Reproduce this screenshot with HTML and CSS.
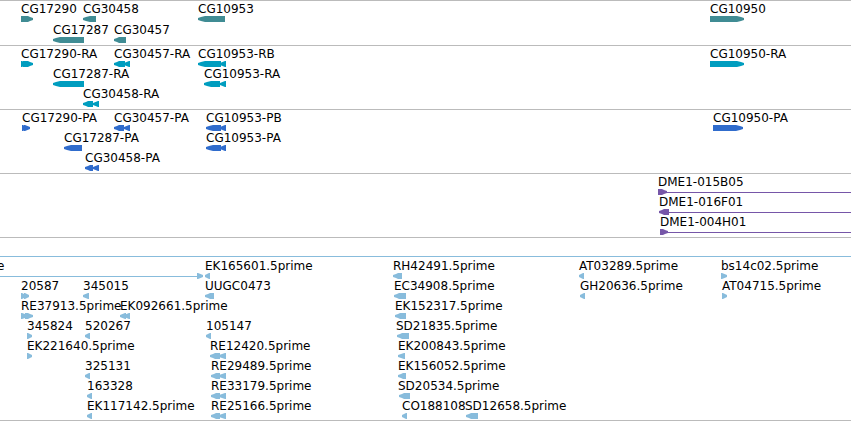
FILE: index.html
```html
<!DOCTYPE html>
<html lang="en">
<head>
<meta charset="utf-8">
<title>Genome region tracks</title>
<link rel="stylesheet" href="styles.css">
</head>
<body>
<main class="browser">
  <section class="track track-gene" data-track="gene" aria-label="Genes"></section>
  <section class="track track-transcript" data-track="transcript" aria-label="Transcripts"></section>
  <section class="track track-protein" data-track="protein" aria-label="Proteins"></section>
  <section class="track track-clone" data-track="clone" aria-label="Clones"></section>
  <section class="track track-est" data-track="est" aria-label="ESTs"></section>
</main>
<script src="tracks.js"></script>
</body>
</html>
```
FILE: styles.css
```css
body {
  margin: 0;
  background: #fff;
  color: #000;
  font-family: "DejaVu Sans", sans-serif;
  font-size: 12px;
  line-height: 14px;
}

.browser {
  overflow: hidden;
  border-bottom: 1px solid #bbb;
}

.track {
  display: grid;
  padding: 1px 0 2px;
  border-top: 1px solid #bbb;
}

.track-gene { color: #408c94; row-gap: 1px; }
.track-transcript { color: #009dbf; }
.track-protein { color: #306ccc; }
.track-clone { color: #7656a8; }
.track-est { color: #88bcdc; padding: 18px 0 1px; }

.track-est::before {
  content: "";
  height: 1px;
  margin-bottom: 2px;
  background: currentColor;
}

.row {
  position: relative;
  height: 20px;
}

/* Features sit at their coordinate along the sequence. */
.feature {
  position: absolute;
  top: 0;
  display: flex;
  flex-direction: column;
  white-space: nowrap;
}

.open-end { right: 0; }

.label {
  height: 14px;
  color: #000;
}

.glyph {
  display: flex;
  height: 6px;
}

.glyph svg {
  flex: none;
  fill: currentColor;
}

.span {
  flex: 1;
  height: 1px;
  margin-top: 3px;
  background: currentColor;
}

.joined {
  left: 0;
  align-items: stretch;
}

.joined .label { margin-left: -3px; }
```
FILE: tracks.js
```js
// Each feature: label, start, then blocks as direction + start-end.
const REGION = 851;
const tracks = {
  gene: [
    ["CG17290 21 R21-33", "CG30458 83 L83-96", "CG10953 198 L198-225", "CG10950 710 R710-744"],
    ["CG17287 53 L53-84", "CG30457 114 L114-126"]
  ],
  transcript: [
    ["CG17290-RA 21 R21-26 R23-33", "CG30457-RA 114 L114-125 L124-130", "CG10953-RB 198 L198-221 L220-226", "CG10950-RA 710 R710-744"],
    ["CG17287-RA 53 L53-84", "CG10953-RA 204 L204-220 L220-226"],
    ["CG30458-RA 83 L83-93 L93-99"]
  ],
  protein: [
    ["CG17290-PA 22 R22-27 R24-30", "CG30457-PA 114 L114-124 L124-130", "CG10953-PB 206 L206-221 L220-226", "CG10950-PA 713 R713-743"],
    ["CG17287-PA 64 L64-82", "CG10953-PA 206 L206-221 L220-226"],
    ["CG30458-PA 85 L85-93 L93-99"]
  ],
  clone: [
    ["DME1-015B05 658 R658-667 >"],
    ["DME1-016F01 659 L659-669 >"],
    ["DME1-004H01 660 R660-668 >"]
  ],
  est: [
    ["e 0 < R197-203", "EK165601.5prime 205 L205-210", "RH42491.5prime 393 L393-402", "AT03289.5prime 579 L579-584", "bs14c02.5prime 721 R721-727"],
    ["20587 21 R21-26 R24-29", "345015 83 L83-89", "UUGC0473 205 L205-214", "EC34908.5prime 394 L394-406", "GH20636.5prime 580 L580-585", "AT04715.5prime 722 R722-727"],
    ["RE37913.5prime 21 R21-28 R25-33", "EK092661.5prime 120 L120-126 L124-130", "EK152317.5prime 395 L395-406"],
    ["345824 27 R27-32", "520267 85 L85-90", "105147 206 L206-211", "SD21835.5prime 396 L397-409"],
    ["EK221640.5prime 27 R27-32", "RE12420.5prime 210 L210-220 L219-226", "EK200843.5prime 398 L398-405"],
    ["325131 85 L85-90", "RE29489.5prime 211 L211-220 L219-226", "EK156052.5prime 398 L398-406"],
    ["163328 87 L87-92", "RE33179.5prime 211 L211-220 L219-226", "SD20534.5prime 398 L399-410"],
    ["EK117142.5prime 87 L87-92", "RE25166.5prime 211 L211-220 L219-226", "CO188108 402 L402-407", "SD12658.5prime 465 L466-478"]
  ]
};

// Outline of one block with a pointed end.
function outline(block, start) {
  const [, dir, a, b] = block.match(/([LR])(\d+)-(\d+)/);
  const x0 = a - start, x1 = b - start, w = x1 - x0;
  const s = dir === "L" ? 1 : -1;
  const tip = s > 0 ? x0 : x1, end = s > 0 ? x1 : x0;
  if (w < 8) return `M${tip} 2V4L${end - s} 6H${end}V0H${end - s}Z`;
  const h = w < 13 ? 5 : 7;
  return `M${tip} 2V4L${tip + s * 3} 5L${tip + s * h} 6H${end}V0H${tip + s * h}L${tip + s * 3} 1Z`;
}

function feature(text) {
  const [label, pos, ...parts] = text.split(" ");
  const start = Number(pos);
  const open = parts.includes(">"), joined = parts.includes("<");
  const blocks = parts.filter(p => p.length > 1);
  const last = Number(blocks[blocks.length - 1].split("-")[1]);
  const origin = joined ? Number(blocks[0].slice(1).split("-")[0]) : start;
  const paths = blocks.map(b => `<path d="${outline(b, origin)}"/>`).join("");
  const svg = `<svg width="${last - origin}" height="6" aria-hidden="true">${paths}</svg>`;
  const line = '<span class="span"></span>';
  const place = joined ? `right:${(1 - last / REGION) * 100}%` : `left:${start / REGION * 100}%`;
  const kind = open ? " open-end" : joined ? " joined" : "";
  return `<div class="feature${kind}" style="${place}"><span class="label">${label}</span>` +
    `<span class="glyph">${joined ? line : ""}${svg}${open ? line : ""}</span></div>`;
}

document.querySelectorAll("[data-track]").forEach(el => {
  el.innerHTML = tracks[el.dataset.track]
    .map(row => `<div class="row">${row.map(feature).join("")}</div>`).join("");
});
```
